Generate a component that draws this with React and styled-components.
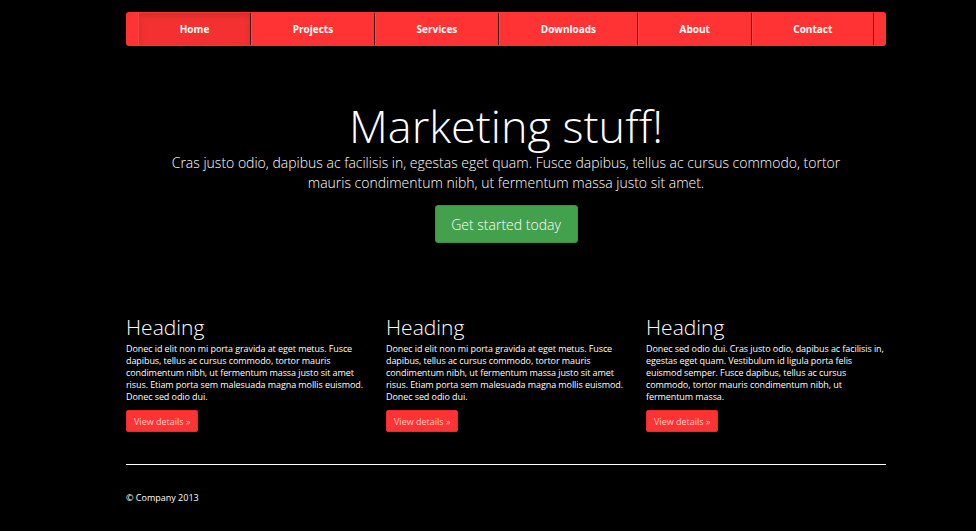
import React from 'react';
import styled, { createGlobalStyle } from 'styled-components';

const GlobalStyle = createGlobalStyle`
  html, body {
    margin: 0;
    padding: 0;
    background: #000;
    color: #fff;
    font-family: "Open Sans", "DejaVu Sans", sans-serif;
  }
`;

const Page = styled.div`
  width: 760px;
  margin-left: 126px;
  padding-top: 12px;
`;

const NavBar = styled.nav`
  display: flex;
  height: 34px;
  padding: 0 12px;
  background: #ff3333;
  border-radius: 3px;
`;

const NavItem = styled.a`
  flex: 1 1 auto;
  display: flex;
  align-items: center;
  justify-content: center;
  padding-bottom: 1px;
  font-size: 10px;
  font-weight: 700;
  color: #fff;
  text-decoration: none;
  margin: 1px 0;
  border-right: 1px solid #3b1414;
  border-left: 1px solid rgba(255, 255, 255, 0.1);
  background: ${(p) => (p.$active ? '#f43131' : 'transparent')};
  box-shadow: ${(p) => (p.$active ? 'inset 0 3px 6px rgba(0,0,0,0.12)' : 'none')};
`;

const Hero = styled.header`
  display: flex;
  flex-direction: column;
  align-items: center;
  text-align: center;
  padding-top: 53px;
`;

const Title = styled.h1`
  margin: 0;
  font-size: 45px;
  font-weight: 300;
  line-height: 54px;
`;

const Lead = styled.p`
  margin: 0;
  width: 700px;
  font-size: 14px;
  font-weight: 300;
  line-height: 20px;
`;

const CtaButton = styled.a`
  margin-top: 12px;
  display: inline-flex;
  align-items: center;
  justify-content: center;
  width: 143px;
  height: 38px;
  box-sizing: border-box;
  background: #43a04c;
  border: 1px solid #3b9144;
  border-radius: 3px;
  color: #fff;
  font-size: 14px;
  font-weight: 300;
  text-decoration: none;
`;

const Columns = styled.section`
  display: grid;
  grid-template-columns: repeat(3, 240px);
  gap: 20px;
  margin-top: 71px;
`;

const Column = styled.div`
  display: flex;
  flex-direction: column;
  align-items: flex-start;
`;

const ColHeading = styled.h2`
  margin: 0 0 3px;
  font-size: 21px;
  font-weight: 300;
  line-height: 26px;
`;

const ColText = styled.p`
  margin: 0;
  font-size: 9px;
  font-weight: 400;
  line-height: 12px;
  letter-spacing: -0.08px;
`;

const DetailsButton = styled.a`
  margin-top: 7px;
  display: inline-flex;
  align-items: center;
  height: 22px;
  box-sizing: border-box;
  padding: 0 7px;
  background: #ff3333;
  border: 1px solid #e82a2a;
  border-radius: 2px;
  color: #ffcccc;
  font-size: 9px;
  text-decoration: none;
`;

const Rule = styled.hr`
  margin: 32px 0 0;
  border: 0;
  border-top: 1px solid #fff;
`;

const Footer = styled.footer`
  padding-top: 26px;
  font-size: 9px;
`;

const navLinks = ['Home', 'Projects', 'Services', 'Downloads', 'About', 'Contact'];

const columns = [
  'Donec id elit non mi porta gravida at eget metus. Fusce dapibus, tellus ac cursus commodo, tortor mauris condimentum nibh, ut fermentum massa justo sit amet risus. Etiam porta sem malesuada magna mollis euismod. Donec sed odio dui.',
  'Donec id elit non mi porta gravida at eget metus. Fusce dapibus, tellus ac cursus commodo, tortor mauris condimentum nibh, ut fermentum massa justo sit amet risus. Etiam porta sem malesuada magna mollis euismod. Donec sed odio dui.',
  'Donec sed odio dui. Cras justo odio, dapibus ac facilisis in, egestas eget quam. Vestibulum id ligula porta felis euismod semper. Fusce dapibus, tellus ac cursus commodo, tortor mauris condimentum nibh, ut fermentum massa.',
];

export default function App() {
  return (
    <>
      <GlobalStyle />
      <Page>
        <NavBar>
          {navLinks.map((label, i) => (
            <NavItem key={label} href="#" $active={i === 0}>
              {label}
            </NavItem>
          ))}
        </NavBar>

        <Hero>
          <Title>Marketing stuff!</Title>
          <Lead>
            Cras justo odio, dapibus ac facilisis in, egestas eget quam. Fusce dapibus, tellus ac cursus commodo, tortor
            mauris condimentum nibh, ut fermentum massa justo sit amet.
          </Lead>
          <CtaButton href="#">Get started today</CtaButton>
        </Hero>

        <Columns>
          {columns.map((text, i) => (
            <Column key={i}>
              <ColHeading>Heading</ColHeading>
              <ColText>{text}</ColText>
              <DetailsButton href="#">View details »</DetailsButton>
            </Column>
          ))}
        </Columns>

        <Rule />
        <Footer>© Company 2013</Footer>
      </Page>
    </>
  );
}
